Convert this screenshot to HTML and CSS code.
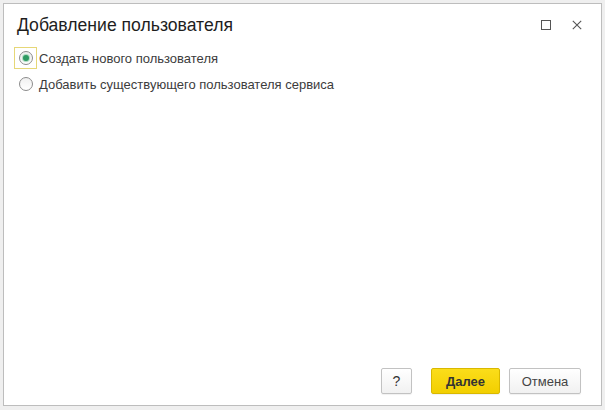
FILE: index.html
```html
<!DOCTYPE html>
<html lang="ru">
<head>
<meta charset="utf-8">
<title>Добавление пользователя</title>
<link rel="stylesheet" href="styles.css">
</head>
<body>
<div class="window">
  <div class="header">
    <div class="title">Добавление пользователя</div>
    <div class="controls">
      <svg class="ctl" width="10" height="10" viewBox="0 0 10 10"><rect x="0.5" y="0.5" width="9" height="9" fill="none" stroke="#555" stroke-width="1"/></svg>
      <svg class="ctl" width="10" height="10" viewBox="0 0 10 10"><path d="M0.8 0.8 L9.2 9.2 M9.2 0.8 L0.8 9.2" stroke="#555" stroke-width="1.1" fill="none"/></svg>
    </div>
  </div>
  <div class="options">
    <div class="option">
      <span class="focus"><span class="radio checked"></span></span>
      <span class="label">Создать нового пользователя</span>
    </div>
    <div class="option">
      <span class="nofocus"><span class="radio"></span></span>
      <span class="label">Добавить существующего пользователя сервиса</span>
    </div>
  </div>
  <div class="footer">
    <button class="btn help">?</button>
    <button class="btn primary">Далее</button>
    <button class="btn">Отмена</button>
  </div>
</div>
</body>
</html>
```
FILE: styles.css
```css
html, body {
  margin: 0;
  padding: 0;
}
body {
  background: #efefef;
  font-family: "Liberation Sans", Arial, sans-serif;
  width: 605px;
  height: 410px;
  overflow: hidden;
}
.window {
  margin: 3px 0 0 3px;
  width: 599px;
  height: 403px;
  box-sizing: border-box;
  border: 1px solid #bdbdbd;
  background: #fff;
  display: flex;
  flex-direction: column;
}
.header {
  display: flex;
  align-items: center;
  padding: 9px 19px 0 13px;
}
.title {
  font-size: 17.6px;
  line-height: 24px;
  color: #1e1e1e;
}
.controls {
  margin-left: auto;
  display: flex;
  gap: 21px;
  align-items: center;
}
.ctl {
  display: block;
}
.options {
  padding: 8px 0 0 10px;
  display: flex;
  flex-direction: column;
}
.option {
  height: 26px;
  display: flex;
  align-items: center;
}
.focus, .nofocus {
  width: 23px;
  height: 22px;
  box-sizing: border-box;
  border: 1px solid transparent;
  display: flex;
  align-items: center;
  justify-content: center;
}
.focus {
  border-color: #e6d777;
}
.radio {
  width: 14px;
  height: 14px;
  box-sizing: border-box;
  border-radius: 50%;
  border: 1px solid #8c8c8c;
  background: linear-gradient(#f0f0f0, #ffffff);
  display: flex;
  align-items: center;
  justify-content: center;
}
.radio.checked::after {
  content: "";
  width: 6px;
  height: 6px;
  border-radius: 50%;
  background: #2e9a62;
  box-shadow: 0 0 1px 1px #a9d8bd;
}
.label {
  margin-left: 2px;
  font-size: 13px;
  color: #3c3c3c;
}
.footer {
  margin-top: auto;
  display: flex;
  justify-content: flex-end;
  padding: 0 20px 11px 0;
}
.btn {
  height: 26px;
  box-sizing: border-box;
  border: 1px solid #c2c2c2;
  border-radius: 2px;
  background: linear-gradient(#ffffff, #f1f1f1);
  font-family: "Liberation Sans", Arial, sans-serif;
  font-size: 13px;
  color: #444;
  padding: 0;
  width: 72px;
  margin-left: 9px;
  box-shadow: 0 1px 1px rgba(0,0,0,0.06);
}
.help {
  width: 31px;
  margin-left: 0;
  margin-right: 10px;
  font-size: 14px;
  color: #333;
}
.primary {
  width: 69px;
  background: linear-gradient(#fbdd1a, #f2cf00);
  border-color: #d9b800;
  font-weight: bold;
  color: #333;
}
```
